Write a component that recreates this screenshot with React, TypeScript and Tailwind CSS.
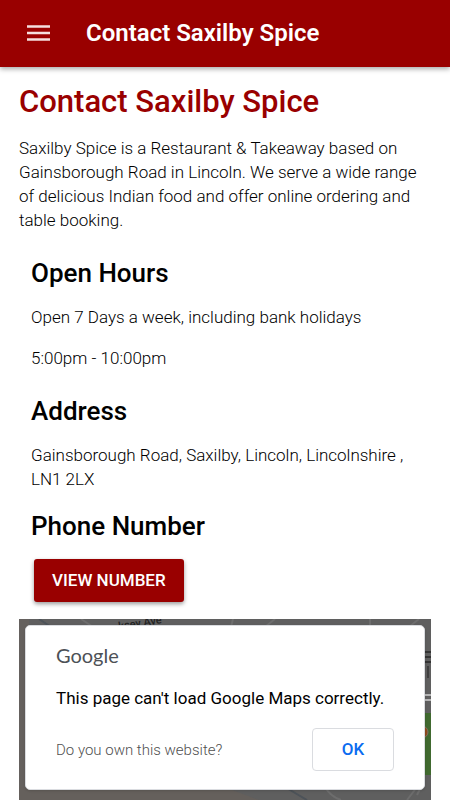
import { useState } from 'react'

function MapBackdrop() {
  return (
    <svg
      className="absolute inset-0 h-full w-full"
      viewBox="0 0 412 181"
      preserveAspectRatio="none"
      aria-hidden="true"
    >
      <rect width="412" height="181" fill="#5f5f5f" />
      <path d="M0 0H10V181H0Z" fill="#65615e" />
      <path d="M0 168H205L240 181H0Z" fill="#65605c" />
      <g fill="none" stroke="#6d6d6d" strokeWidth="2">
        <path d="M62 0L74 8M214 0L212 8M256 0L246 8M351 0V8M400 0L390 8" />
        <path d="M306 168Q312 178 322 181M398 168L388 181M402 168L398 176" />
      </g>
      <path d="M20 0L32 8M266 168L288 181" fill="none" stroke="#4d5359" strokeWidth="2" />
      <path d="M404 94H412V156H404Z" fill="#40692f" />
      <circle cx="403" cy="113" r="6" fill="#8f4a1c" stroke="#7b7468" />
      <path d="M404 33H412M404 38H412M404 43H412" stroke="#343434" strokeWidth="2" />
      <path d="M409 47V59" stroke="#222" strokeWidth="1" />
      <path d="M404 76H412M404 81H412" stroke="#b5b5b5" strokeWidth="2" />
      <text x="100" y="11" fontSize="11" fontWeight="500" fill="#222" transform="rotate(-9 100 11)">
        ksey Ave
      </text>
    </svg>
  )
}

function MapError({ onClose }: { onClose: () => void }) {
  return (
    <div
      role="alertdialog"
      aria-labelledby="map-error"
      className="relative rounded-[5px] border border-[#dadce0] bg-white px-[30px] pt-[17px] pb-[18px] shadow-sm"
    >
      <div className="font-['Lato',sans-serif] text-[20px] leading-6 text-[#4d5156]">Google</div>
      <p id="map-error" className="mt-[19px] text-[17px] leading-6 text-black">
        This page can't load Google Maps correctly.
      </p>
      <div className="mt-[18px] flex items-center justify-between">
        <a href="#own" className="text-[15px] leading-5 font-light text-[#4f4f4f]">
          Do you own this website?
        </a>
        <button
          type="button"
          onClick={onClose}
          className="h-[43px] w-[82px] rounded-[4px] border border-[#dadce0] bg-white text-[17px] font-medium text-[#0b6cf0]"
        >
          OK
        </button>
      </div>
    </div>
  )
}

export default function App() {
  const [mapError, setMapError] = useState(true)

  return (
    <div className="bg-white font-['Roboto',sans-serif] text-black">
      <header className="relative flex h-[67px] items-center bg-[#990000] px-[26px] pb-[2px] text-white shadow-[0_2px_5px_rgba(0,0,0,0.35)]">
        <button type="button" aria-label="Open menu" className="w-[60px]">
          <svg width="24" height="16" viewBox="0 0 24 16" aria-hidden="true">
            <path d="M1 1.5H24M1 8H24M1 14.5H24" stroke="#f5dede" strokeWidth="2.4" />
          </svg>
        </button>
        <span className="text-[24px] leading-8 font-semibold">Contact Saxilby Spice</span>
      </header>

      <main className="px-[19px]">
        <h1 className="pt-[15px] text-[31px] leading-10 font-medium text-[#990000]">
          Contact Saxilby Spice
        </h1>
        <p className="mt-[14px] text-[17px] leading-6 font-light">
          Saxilby Spice is a Restaurant &amp; Takeaway based on Gainsborough Road in Lincoln. We
          serve a wide range of delicious Indian food and offer online ordering and table booking.
        </p>

        <section className="mt-[25px] px-3">
          <h2 className="text-[26px] leading-8 font-medium">Open Hours</h2>
          <p className="mt-4 text-[17px] leading-6 font-light">
            Open 7 Days a week, including bank holidays
          </p>
          <p className="mt-[17px] text-[17px] leading-6 font-light">5:00pm - 10:00pm</p>
        </section>

        <section className="mt-[25px] px-3">
          <h2 className="text-[26px] leading-8 font-medium">Address</h2>
          <p className="mt-4 text-[17px] leading-6 font-light">
            Gainsborough Road, Saxilby, Lincoln, Lincolnshire , LN1 2LX
          </p>
        </section>

        <section className="mt-[19px] px-3">
          <h2 className="text-[26px] leading-8 font-medium">Phone Number</h2>
          <button
            type="button"
            className="mt-[17px] ml-[3px] h-[43px] rounded-[3px] bg-[#990000] px-[18px] text-[17px] font-medium text-white shadow-[0_2px_4px_rgba(0,0,0,0.4)]"
          >
            VIEW NUMBER
          </button>
        </section>

        <div className="relative mt-[17px] overflow-hidden px-[6px] pt-[6px] pb-[10px]">
          <MapBackdrop />
          {mapError && <MapError onClose={() => setMapError(false)} />}
        </div>
      </main>
    </div>
  )
}
